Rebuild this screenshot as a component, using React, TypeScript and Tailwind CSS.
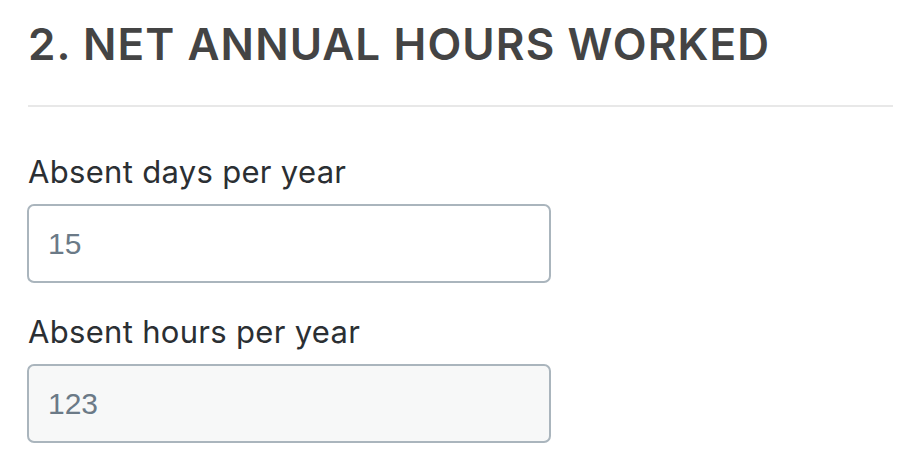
export default function App() {
  return (
    <div className="min-h-screen w-[916px] bg-white pl-[28px] pr-[23px] pt-[18px]" style={{ fontFamily: 'Inter, "Noto Sans", sans-serif' }}>
      <h2 className="text-[44px] font-semibold leading-[52px] tracking-[0.025em] text-[#444444]">2. NET ANNUAL HOURS WORKED</h2>
      <div className="mt-[35px] h-[2px] bg-[#e8e8e8]" />

      <div className="mt-[47px]">
        <label className="block text-[31px] leading-[36px] tracking-[0.01em] text-[#2b2f33]">Absent days per year</label>
        <input
          defaultValue="15"
          className="mt-[14px] block h-[79px] w-[524px] -ml-[1px] rounded-[7px] border-2 border-[#aab5bd] bg-white px-[19px] text-[30px] text-[#6b7a87] outline-none"
          style={{ fontFamily: '"Liberation Sans", Arial, sans-serif' }}
        />
      </div>

      <div className="mt-[31px]">
        <label className="block text-[31px] leading-[36px] tracking-[0.01em] text-[#2b2f33]">Absent hours per year</label>
        <input
          defaultValue="123"
          readOnly
          className="mt-[14px] block h-[79px] w-[524px] -ml-[1px] rounded-[7px] border-2 border-[#aab5bd] bg-[#f7f8f8] px-[19px] text-[30px] text-[#6b7a87] outline-none"
          style={{ fontFamily: '"Liberation Sans", Arial, sans-serif' }}
        />
      </div>
    </div>
  )
}
